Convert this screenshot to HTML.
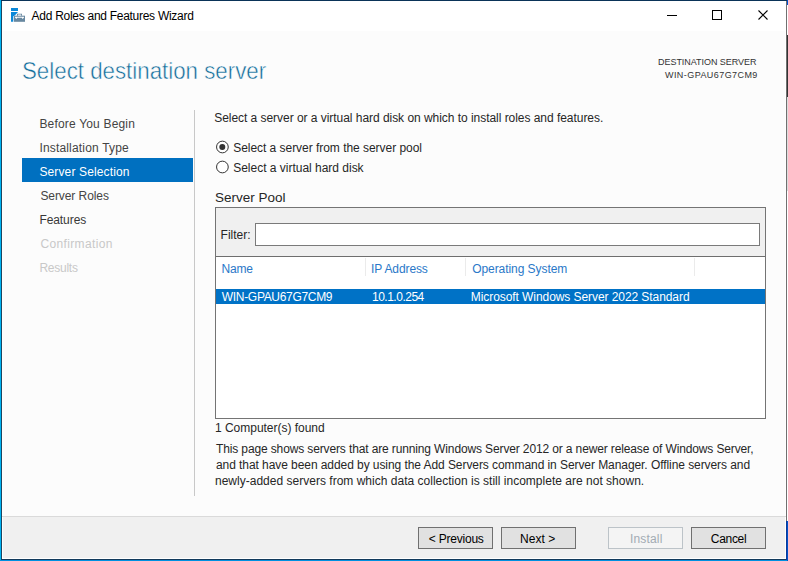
<!DOCTYPE html>
<html><head><meta charset="utf-8">
<style>
*{margin:0;padding:0;box-sizing:border-box}
html,body{width:788px;height:561px;overflow:hidden;background:#1a3d5a}
body{position:relative;font-family:"Liberation Sans",sans-serif;font-size:12px;color:#000}
.a{position:absolute}
.t{position:absolute;white-space:nowrap;font-family:"Liberation Sans",sans-serif}
.btn{position:absolute;top:527px;width:75px;height:22px;border:1px solid #707070;background:#e1e1e1}
.btn.d{border-color:#bcc3c8;background:#f4f4f4}
.radio{position:absolute;width:13px;height:13px;border:1px solid #333;border-radius:50%;background:#fff}
.colsep{position:absolute;top:258px;width:1px;height:18px;background:#ebebeb}
</style></head>
<body>
<!-- window frame -->
<div class="a" style="left:0;top:0;width:788px;height:561px;background:#ffffff"></div>
<div class="a" style="left:0;top:0;width:1px;height:561px;background:#00b4f4"></div>
<div class="a" style="left:1px;top:0;width:1px;height:560px;background:#1c4660"></div>
<div class="a" style="left:1px;top:0;width:786px;height:1px;background:#0a3358"></div>
<div class="a" style="left:0;top:560px;width:788px;height:1px;background:#0090e0"></div>
<div class="a" style="left:1px;top:559px;width:786px;height:1px;background:#123a5c"></div>
<div class="a" style="left:3px;top:31px;width:782px;height:485px;background:#fcfcfc"></div>
<div class="a" style="left:2px;top:516px;width:784px;height:1px;background:#dadada"></div>
<div class="a" style="left:3px;top:517px;width:782px;height:41px;background:#f0f0f0"></div>
<div class="a" style="left:786px;top:1px;width:1px;height:520px;background:#707070"></div>
<div class="a" style="left:786px;top:521px;width:2px;height:39px;background:#0a3a9a"></div>
<div class="a" style="left:787px;top:521px;width:1px;height:40px;background:#0050c8"></div>
<div class="a" style="left:787px;top:0;width:1px;height:5px;background:#0050d0"></div>
<div class="a" style="left:787px;top:35px;width:1px;height:62px;background:#333333"></div>
<div class="a" style="left:787px;top:97px;width:1px;height:94px;background:#dddddd"></div>

<!-- title icon -->
<svg class="a" style="left:8px;top:5px" width="20" height="20" viewBox="0 0 20 20">
  <rect x="3" y="3" width="7" height="3" fill="#0a88d8"/>
  <path d="M3 7.1 H10 L7.5 9.8 Q6.4 11 5.3 11.2 V16.8 H3 Z" fill="#0a88d8"/>
  <rect x="6" y="10.7" width="11" height="6.1" fill="#6888a0"/>
  <path d="M9 10.7 V8.7 H14 V10.7 H13.1 V9.6 H9.9 V10.7 Z" fill="#6888a0"/>
  <path d="M7 11.8 H16 V12.6 L14.6 13.9 L13.8 12.8 H9.2 L8.4 13.9 L7 12.6 Z" fill="#fff"/>
</svg>

<!-- window controls -->
<div class="a" style="left:667px;top:15px;width:10px;height:1px;background:#000"></div>
<div class="a" style="left:712px;top:10px;width:10px;height:10px;border:1px solid #000"></div>
<svg class="a" style="left:757px;top:9px" width="13" height="13" viewBox="0 0 13 13">
  <path d="M1.5 1.5 L10.5 10.5 M10.5 1.5 L1.5 10.5" stroke="#000" stroke-width="1.1"/>
</svg>

<!-- nav -->
<div class="a" style="left:22px;top:158px;width:171px;height:24px;background:#0070c0"></div>
<div class="a" style="left:194px;top:110px;width:1px;height:386px;background:#c8c8c8"></div>

<!-- radios -->
<svg class="a" style="left:210px;top:135px" width="24" height="40" viewBox="0 0 24 40">
  <circle cx="12.4" cy="12" r="5.85" fill="#fff" stroke="#333" stroke-width="1"/>
  <circle cx="12.3" cy="12" r="3" fill="#333"/>
  <circle cx="12.4" cy="32" r="5.85" fill="#fff" stroke="#333" stroke-width="1"/>
</svg>

<!-- pool box -->
<div class="a" style="left:215px;top:207px;width:551px;height:212px;border:1px solid #747474;background:#fff"></div>
<div class="a" style="left:216px;top:208px;width:549px;height:48px;background:#f0f0f0"></div>
<div class="a" style="left:216px;top:256px;width:549px;height:1px;background:#6e6e6e"></div>
<div class="a" style="left:255px;top:223px;width:505px;height:23px;border:1px solid #7a7a7a;background:#fff"></div>
<div class="colsep" style="left:365px"></div>
<div class="colsep" style="left:465px"></div>
<div class="colsep" style="left:694px"></div>
<div class="a" style="left:216px;top:289px;width:549px;height:15px;background:#0072c6"></div>

<!-- buttons -->
<div class="btn" style="left:418px"></div>
<div class="btn" style="left:501px"></div>
<div class="btn d" style="left:608px"></div>
<div class="btn" style="left:691px"></div>

<div class="t" id="title" style="left:31.60px;top:10.00px;font-size:12px;line-height:12px;letter-spacing:-0.280px;color:#000">Add Roles and Features Wizard</div>
<div class="t" id="heading" style="left:21.75px;top:59.00px;font-size:24px;line-height:24px;letter-spacing:0.000px;color:#116c9a;-webkit-text-stroke:0.5px #fcfcfc;transform:scaleX(0.9291);transform-origin:0 0">Select destination server</div>
<div class="t" id="dest1" style="left:658.00px;top:58.00px;font-size:9px;line-height:9px;letter-spacing:-0.041px;color:#333">DESTINATION SERVER</div>
<div class="t" id="dest2" style="left:665.00px;top:71.00px;font-size:9px;line-height:9px;letter-spacing:0.429px;color:#333">WIN-GPAU67G7CM9</div>
<div class="t" id="nav1" style="left:39.40px;top:118.00px;font-size:12px;line-height:12px;letter-spacing:0.183px;color:#444">Before You Begin</div>
<div class="t" id="nav2" style="left:39.40px;top:142.00px;font-size:12px;line-height:12px;letter-spacing:0.175px;color:#444">Installation Type</div>
<div class="t" id="nav3" style="left:39.40px;top:166.00px;font-size:12px;line-height:12px;letter-spacing:0.133px;color:#fff">Server Selection</div>
<div class="t" id="nav4" style="left:40.40px;top:190.00px;font-size:12px;line-height:12px;letter-spacing:-0.073px;color:#444">Server Roles</div>
<div class="t" id="nav5" style="left:39.40px;top:214.00px;font-size:12px;line-height:12px;letter-spacing:-0.071px;color:#383838">Features</div>
<div class="t" id="nav6" style="left:40.40px;top:238.00px;font-size:12px;line-height:12px;letter-spacing:0.364px;color:#c8c8c8">Confirmation</div>
<div class="t" id="nav7" style="left:39.40px;top:262.00px;font-size:12px;line-height:12px;letter-spacing:-0.250px;color:#c8c8c8">Results</div>
<div class="t" id="main1" style="left:214.20px;top:112.00px;font-size:12px;line-height:12px;letter-spacing:-0.040px;color:#262626">Select a server or a virtual hard disk on which to install roles and features.</div>
<div class="t" id="r1t" style="left:233.20px;top:142.00px;font-size:12px;line-height:12px;letter-spacing:-0.036px;color:#262626">Select a server from the server pool</div>
<div class="t" id="r2t" style="left:233.20px;top:162.00px;font-size:12px;line-height:12px;letter-spacing:-0.012px;color:#262626">Select a virtual hard disk</div>
<div class="t" id="pool" style="left:215.00px;top:191.00px;font-size:13.5px;line-height:13.5px;letter-spacing:0.000px;color:#262626">Server Pool</div>
<div class="t" id="filter" style="left:220.60px;top:229.00px;font-size:12px;line-height:12px;letter-spacing:0.000px;color:#262626">Filter:</div>
<div class="t" id="hname" style="left:221.40px;top:263.00px;font-size:12px;line-height:12px;letter-spacing:-0.167px;color:#2a78c8">Name</div>
<div class="t" id="hip" style="left:371.00px;top:263.00px;font-size:12px;line-height:12px;letter-spacing:-0.108px;color:#2a78c8">IP Address</div>
<div class="t" id="hos" style="left:472.20px;top:263.00px;font-size:12px;line-height:12px;letter-spacing:-0.063px;color:#2a78c8">Operating System</div>
<div class="t" id="row1" style="left:221.80px;top:291.00px;font-size:12px;line-height:12px;letter-spacing:-0.314px;color:#fff">WIN-GPAU67G7CM9</div>
<div class="t" id="row2" style="left:372.00px;top:291.00px;font-size:12px;line-height:12px;letter-spacing:-0.496px;color:#fff">10.1.0.254</div>
<div class="t" id="row3" style="left:470.80px;top:291.00px;font-size:12px;line-height:12px;letter-spacing:-0.072px;color:#fff">Microsoft Windows Server 2022 Standard</div>
<div class="t" id="found" style="left:215.00px;top:422.00px;font-size:12px;line-height:12px;letter-spacing:-0.022px;color:#262626">1 Computer(s) found</div>
<div class="t" id="p1" style="left:216.00px;top:443.00px;font-size:12px;line-height:12px;letter-spacing:-0.130px;color:#262626">This page shows servers that are running Windows Server 2012 or a newer release of Windows Server,</div>
<div class="t" id="p2" style="left:216.00px;top:459.00px;font-size:12px;line-height:12px;letter-spacing:-0.070px;color:#262626">and that have been added by using the Add Servers command in Server Manager. Offline servers and</div>
<div class="t" id="p3" style="left:215.00px;top:475.00px;font-size:12px;line-height:12px;letter-spacing:0.012px;color:#262626">newly-added servers from which data collection is still incomplete are not shown.</div>
<div class="t" id="bprev" style="left:428.80px;top:533.00px;font-size:12px;line-height:12px;letter-spacing:-0.218px;color:#000">&lt; Previous</div>
<div class="t" id="bnext" style="left:520.00px;top:533.00px;font-size:12px;line-height:12px;letter-spacing:0.040px;color:#000">Next &gt;</div>
<div class="t" id="binst" style="left:630.00px;top:533.00px;font-size:12px;line-height:12px;letter-spacing:0.167px;color:#a2abb3">Install</div>
<div class="t" id="bcanc" style="left:710.80px;top:533.00px;font-size:12px;line-height:12px;letter-spacing:-0.300px;color:#000">Cancel</div>
</body></html>
